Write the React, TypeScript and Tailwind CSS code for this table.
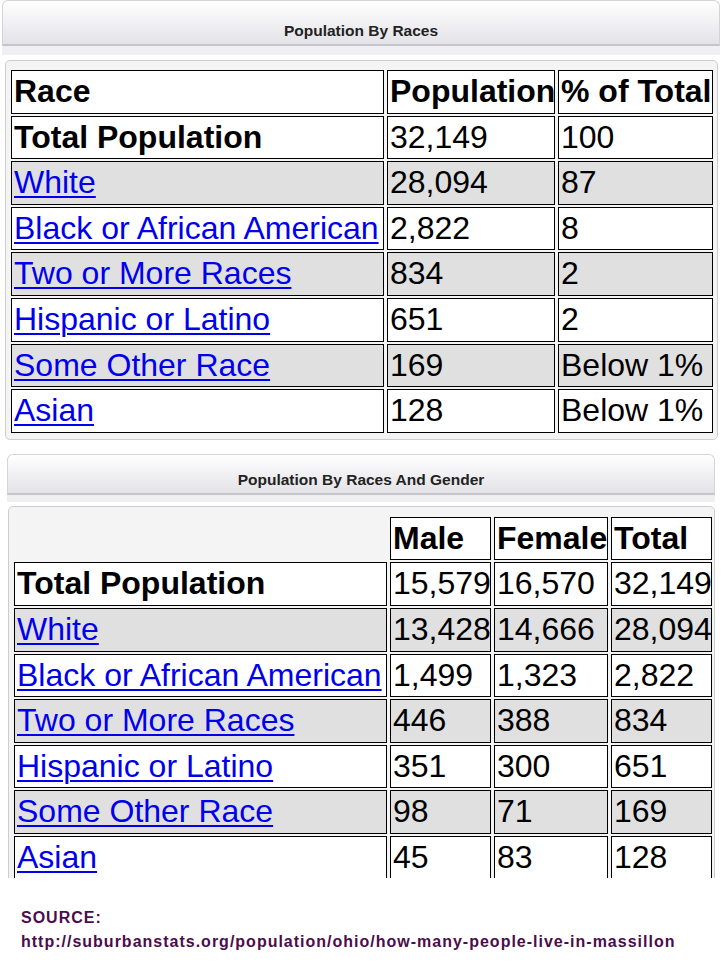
import React from 'react';

type Row = { name: string; cells: string[]; link: boolean; bold?: boolean };

const races: Row[] = [
  { name: 'Total Population', cells: ['32,149', '100'], link: false, bold: true },
  { name: 'White', cells: ['28,094', '87'], link: true },
  { name: 'Black or African American', cells: ['2,822', '8'], link: true },
  { name: 'Two or More Races', cells: ['834', '2'], link: true },
  { name: 'Hispanic or Latino', cells: ['651', '2'], link: true },
  { name: 'Some Other Race', cells: ['169', 'Below 1%'], link: true },
  { name: 'Asian', cells: ['128', 'Below 1%'], link: true },
];

const gender: Row[] = [
  { name: 'Total Population', cells: ['15,579', '16,570', '32,149'], link: false, bold: true },
  { name: 'White', cells: ['13,428', '14,666', '28,094'], link: true },
  { name: 'Black or African American', cells: ['1,499', '1,323', '2,822'], link: true },
  { name: 'Two or More Races', cells: ['446', '388', '834'], link: true },
  { name: 'Hispanic or Latino', cells: ['351', '300', '651'], link: true },
  { name: 'Some Other Race', cells: ['98', '71', '169'], link: true },
  { name: 'Asian', cells: ['45', '83', '128'], link: true },
];

const cell =
  'border border-black px-[2px] py-[2px] leading-[37.6px] whitespace-nowrap overflow-visible text-left align-middle';

const SectionHeader = ({ title, tall }: { title: string; tall?: boolean }) => (
  <div>
    <div
      className={`${tall ? 'h-[46px]' : 'h-[41px]'} flex items-end justify-center rounded-t-[6px] border border-b-2 border-[#d4d4d8] border-b-[#c4c4cc] bg-gradient-to-b from-white to-[#e3e3e8] pb-[4px]`}
    >
      <span className="text-[15.5px] font-bold leading-[18px] text-[#222]">{title}</span>
    </div>
    <div className={`${tall ? 'h-[9px]' : 'h-[7px]'} bg-[#f0f0f2]`} />
  </div>
);

const NameCell = ({ row, gray }: { row: Row; gray: boolean }) => (
  <td className={`${cell} ${gray ? 'bg-[#e0e0e0]' : 'bg-white'} ${row.bold ? 'font-bold' : ''}`}>
    {row.link ? (
      <a href="#" className="text-[#0000ee] underline decoration-[2px] underline-offset-[3px]">
        {row.name}
      </a>
    ) : (
      row.name
    )}
  </td>
);

export default function App() {
  return (
    <div
      className="relative h-[966px] w-[722px] overflow-hidden bg-white text-black"
      style={{ fontFamily: '"Liberation Sans", Arial, sans-serif' }}
    >
      {/* Population By Races */}
      <div className="ml-[2px] w-[718px]">
        <SectionHeader title="Population By Races" tall />
      </div>
      <div className="mt-[5px] ml-[5px] w-[713px] rounded-[5px] border border-[#cdcdcd] bg-[#f4f4f4] pl-[2px] pr-[1px] pt-[7px] pb-[4px]">
        <table className="w-[708px] table-fixed border-separate border-spacing-x-[3px] border-spacing-y-[2px] text-[32px]">
          <tbody>
            <tr className="font-bold">
              <td className={`${cell} w-[373px] bg-white`}>Race</td>
              <td className={`${cell} w-[168px] bg-white`}>Population</td>
              <td className={`${cell} w-[155px] bg-white`}>% of Total</td>
            </tr>
            {races.map((r, i) => (
              <tr key={r.name}>
                <NameCell row={r} gray={i % 2 === 1} />
                {r.cells.map((c, j) => (
                  <td key={j} className={`${cell} ${i % 2 === 1 ? 'bg-[#e0e0e0]' : 'bg-white'}`}>
                    {c}
                  </td>
                ))}
              </tr>
            ))}
          </tbody>
        </table>
      </div>

      {/* Population By Races And Gender */}
      <div className="mt-[14px] ml-[7px] w-[708px]">
        <SectionHeader title="Population By Races And Gender" />
      </div>
      <div className="mt-[4px] ml-[8px] h-[372px] w-[707px] overflow-hidden">
        <div className="rounded-[5px] border border-[#cdcdcd] bg-[#f4f4f4] pl-[2px] pr-0 pt-[8px] pb-[4px]">
          <table className="w-[704px] table-fixed border-separate border-spacing-x-[3px] border-spacing-y-[2px] text-[32px]">
            <tbody>
              <tr className="font-bold">
                <td className="w-[373px] px-[2px] py-[2px] leading-[37.6px]" />
                <td className={`${cell} w-[101px] bg-white`}>Male</td>
                <td className={`${cell} w-[114px] bg-white`}>Female</td>
                <td className={`${cell} w-[101px] bg-white`}>Total</td>
              </tr>
              {gender.map((r, i) => (
                <tr key={r.name}>
                  <NameCell row={r} gray={i % 2 === 1} />
                  {r.cells.map((c, j) => (
                    <td key={j} className={`${cell} ${i % 2 === 1 ? 'bg-[#e0e0e0]' : 'bg-white'}`}>
                      {c}
                    </td>
                  ))}
                </tr>
              ))}
            </tbody>
          </table>
        </div>
      </div>

      {/* Source */}
      <div className="mt-[28px] ml-[21px] text-[16px] font-bold leading-[24px] tracking-[1px] text-[#4b0d4b]">
        <div>SOURCE:</div>
        <div>http://suburbanstats.org/population/ohio/how-many-people-live-in-massillon</div>
      </div>
    </div>
  );
}
